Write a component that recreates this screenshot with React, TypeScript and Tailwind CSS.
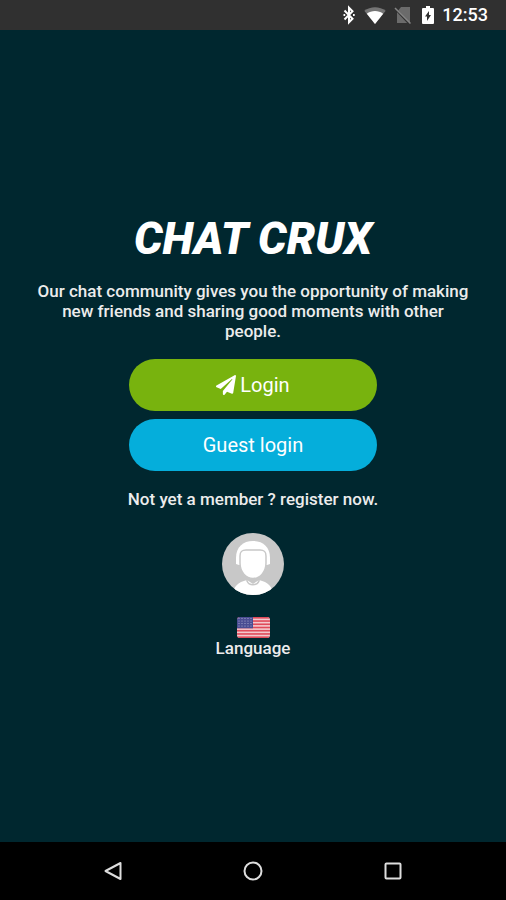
import { useState } from "react";
import { FaPaperPlane } from "react-icons/fa";

function StatusBar() {
  return (
    <header className="flex h-[30px] items-center justify-end bg-[#303030] pr-[18px] text-white">
      <svg className="mr-2 h-5 w-3.5" viewBox="0 0 14 20" fill="none" stroke="currentColor" strokeWidth="2">
        <path d="M2.5 5.5 10.500 13.800 7 17.300V2.700l3.500 3.500-8 8.300" />
        <path d="M1.500 10h1.700M11 10h1.700" />
      </svg>
      <svg className="mr-2 h-5 w-[22px]" viewBox="0 0 22 20">
        <path d="M11 19 .3 5.7C6.2 1 15.8 1 21.7 5.7Z" fill="#757575" />
        <path d="M11 19 2.8 8.800C7.4 5.2 14.6 5.2 19.2 8.800Z" fill="#fff" />
      </svg>
      <svg className="mr-2.5 h-5 w-[18px]" viewBox="0 0 18 20">
        <path d="M7 2h9v16H3V7Z" fill="#6b6b6b" />
        <path d="M0 2.5 15.5 19" stroke="#303030" strokeWidth="2" />
        <path d="M1 3 16.5 18.5" stroke="#858585" strokeWidth="1.5" />
      </svg>
      <svg className="mr-2 h-5 w-3" viewBox="0 0 12 20">
        <path d="M4 1h4v2h3a1 1 0 0 1 1 1v14a1 1 0 0 1-1 1H1a1 1 0 0 1-1-1V4a1 1 0 0 1 1-1h3Z" fill="#fff" />
        <path d="M7 6v4h2l-4 6v-4.5H3Z" fill="#303030" />
      </svg>
      <span className="text-lg font-medium">12:53</span>
    </header>
  );
}

function Avatar() {
  return (
    <svg className="size-[62px]" viewBox="0 0 62 62" role="img" aria-label="Guest">
      <defs>
        <clipPath id="avatar-clip">
          <circle cx="31" cy="31" r="31" />
        </clipPath>
      </defs>
      <g clipPath="url(#avatar-clip)">
        <rect width="62" height="62" fill="#c8c8c8" />
        <path d="M11 62c0-8 5-13 14-15l6 4 6-4c9 2 14 7 14 15Z" fill="#fff" />
        <path d="M14 31V25C14 14 21 8 31 8s17 6 17 17v6l-3 1H17Z" fill="#fff" />
        <path
          d="M18 23c0-5 2-6 6-6h14c4 0 6 1 6 6v7c0 9-6 15.500-13 15.500S18 39 18 30Z"
          fill="#fff"
          stroke="#c8c8c8"
          strokeWidth="1.5"
        />
        <path d="M25 46v2c2 5 10 5 12 0v-2" fill="none" stroke="#c8c8c8" strokeWidth="1.5" />
      </g>
    </svg>
  );
}

const stripes = [0, 2, 4, 6, 8, 10, 12];
const starRows = [1.5, 4, 6.5, 9];
const starCols = [2, 5, 8, 11, 14];

function UsFlag() {
  return (
    <svg className="h-[21px] w-[33px]" viewBox="0 0 33 21">
      <defs>
        <clipPath id="flag-clip">
          <rect width="33" height="21" rx="3" />
        </clipPath>
      </defs>
      <g clipPath="url(#flag-clip)">
        <rect width="33" height="21" fill="#f3c8cd" />
        {stripes.map((i) => (
          <rect key={i} y={(i * 21) / 13} width="33" height={21 / 13} fill="#e04a5a" />
        ))}
        <rect width="16" height="11.3" fill="#4a4d93" />
        {starRows.map((y) =>
          starCols.map((x) => <circle key={`${x}-${y}`} cx={x} cy={y} r="0.5" fill="#c3c4e0" />)
        )}
      </g>
    </svg>
  );
}

function NavigationBar() {
  return (
    <nav className="grid h-[58px] grid-cols-3 items-center bg-black px-[43px] text-[#dedede]">
      <button type="button" aria-label="Back" className="flex justify-center">
        <svg className="size-5" viewBox="0 0 20 20" fill="none" stroke="currentColor" strokeWidth="2">
          <path d="M17.5 2v16L2.5 10Z" strokeLinejoin="round" />
        </svg>
      </button>
      <button type="button" aria-label="Home" className="flex justify-center">
        <svg className="size-5" viewBox="0 0 20 20" fill="none" stroke="currentColor" strokeWidth="2">
          <circle cx="10" cy="10" r="8.5" />
        </svg>
      </button>
      <button type="button" aria-label="Recent apps" className="flex justify-center">
        <svg className="size-5" viewBox="0 0 20 20" fill="none" stroke="currentColor" strokeWidth="2">
          <rect x="2.5" y="2.5" width="15" height="15" rx="1" />
        </svg>
      </button>
    </nav>
  );
}

export default function App() {
  const [pending, setPending] = useState(false);

  return (
    <div className="flex min-h-screen flex-col bg-[#00272f] font-['Roboto',sans-serif] text-[#ececec]">
      <StatusBar />

      <main className="flex flex-1 flex-col items-center justify-center px-9 text-center">
        <h1 className="text-[45px] leading-12 font-black text-white italic">CHAT CRUX</h1>

        <p className="mt-[18px] max-w-md text-[17px] leading-5 font-medium">
          Our chat community gives you the opportunity of making new friends and sharing good moments with other people.
        </p>

        {/* Login options */}
        <div className="mt-[18px] flex w-full max-w-[248px] flex-col gap-2 text-xl text-white">
          <button
            type="button"
            disabled={pending}
            onClick={() => setPending(true)}
            className="flex h-13 items-center justify-center gap-1 rounded-full bg-[#78b30e]"
          >
            <FaPaperPlane />
            Login
          </button>
          <button type="button" className="h-13 rounded-full bg-[#05aedb]">
            Guest login
          </button>
        </div>

        <a href="#register" className="mt-[18px] text-[17px] leading-5 font-medium">
          Not yet a member ? register now.
        </a>

        <div className="mt-6">
          <Avatar />
        </div>

        <button type="button" className="mt-[22px] flex flex-col items-center text-[17px] leading-5 font-medium">
          <UsFlag />
          Language
        </button>
      </main>

      <NavigationBar />
    </div>
  );
}
